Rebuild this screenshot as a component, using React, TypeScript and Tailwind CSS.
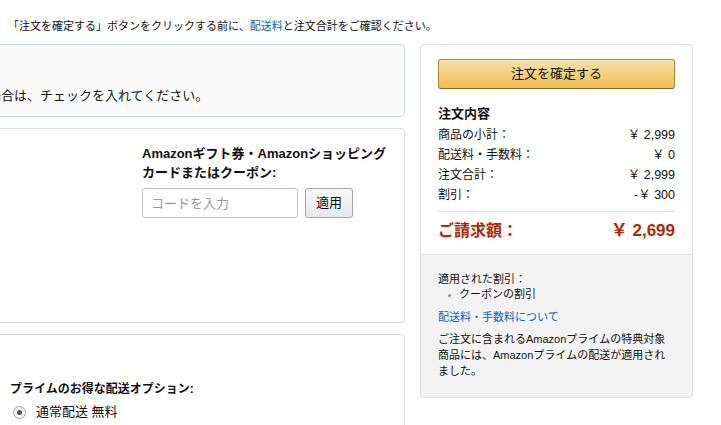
import React from "react";

const font = "font-['Liberation_Sans','Noto_Sans_CJK_JP',sans-serif]";

function Row({ label, value }: { label: string; value: string }) {
  return (
    <div className="flex justify-between text-[12px] leading-[20px] text-[#111]">
      <span>{label}</span>
      <span className="text-[12.5px]">{value}</span>
    </div>
  );
}

export default function App() {
  return (
    <div className={`${font} min-h-screen w-[721px] overflow-hidden bg-white text-[#111]`}>
      <div className="pt-[19px] pl-[8px] text-[11px] leading-[14px] whitespace-nowrap">
        「注文を確定する」ボタンをクリックする前に、
        <span className="text-[#0066c0]">配送料</span>
        と注文合計をご確認ください。
      </div>

      <div className="mt-[11px] flex">
        {/* left column, cut off at the left edge */}
        <div className="-ml-[200px] flex w-[605px] shrink-0 flex-col gap-[11px]">
          <div className="h-[73px] rounded-[4px] border border-[#c5d9e5] bg-[#fafafa] pl-[187px] pt-[41px] text-[13px] leading-[20px] whitespace-nowrap">
            場合は、チェックを入れてください。
          </div>

          <div className="flex h-[195px] rounded-[4px] border border-[#dddddd] bg-white pl-[16px] pt-[15px]">
            <div className="w-[325px] shrink-0" />
            <div>
              <div className="text-[13px] font-bold leading-[19px] whitespace-nowrap">
                Amazonギフト券・Amazonショッピング
                <br />
                カードまたはクーポン:
              </div>
              <div className="mt-[6px] flex gap-[7px]">
                <input
                  className="h-[30px] w-[156px] rounded-[3px] border border-[#c4c4c4] px-[8px] text-[13px] text-[#111] placeholder:text-[#999] shadow-[inset_0_1px_0_rgba(0,0,0,0.05)] outline-none"
                  placeholder="コードを入力"
                />
                <button className="h-[30px] w-[48px] rounded-[3px] border border-[#a2a6ac] bg-gradient-to-b from-[#f7f8fa] to-[#e7e9ec] text-[13px] text-[#111]">
                  適用
                </button>
              </div>
            </div>
          </div>

          <div className="flex h-[120px] rounded-t-[4px] border border-[#dddddd] bg-white pl-[16px] pt-[44px]">
            <div className="w-[193px] shrink-0" />
            <div>
              <div className="text-[12px] font-bold leading-[20px] text-[#111] whitespace-nowrap">
                プライムのお得な配送オプション:
              </div>
              <div className="mt-[3px] flex items-center">
                <span className="ml-[3px] flex h-[13px] w-[13px] items-center justify-center rounded-full border border-[#a6a6a6] bg-[#f3f3f3]">
                  <span className="h-[5px] w-[5px] rounded-full bg-[#555]" />
                </span>
                <span className="ml-[10px] text-[13px] leading-[20px] text-[#111]">
                  通常配送 無料
                </span>
              </div>
            </div>
          </div>
        </div>

        {/* right column */}
        <div className="ml-[15px] flex h-[354px] w-[273px] shrink-0 flex-col overflow-hidden rounded-[4px] border border-[#dddddd]">
          <div className="px-[17px] pt-[14px] pb-[12px]">
            <button className="h-[30px] w-full rounded-[3px] border border-[#a88734] border-b-[#846a29] bg-gradient-to-b from-[#f7dfa5] to-[#f0c14b] text-[13px] text-[#111] shadow-[inset_0_1px_0_rgba(255,255,255,0.4)]">
              注文を確定する
            </button>
            <div className="mt-[14px] text-[13px] font-bold leading-[22px]">注文内容</div>
            <Row label="商品の小計：" value="￥ 2,999" />
            <Row label="配送料・手数料：" value="￥ 0" />
            <Row label="注文合計：" value="￥ 2,999" />
            <Row label="割引：" value="-￥ 300" />
            <div className="mt-[6px] h-px bg-[#dddddd]" />
            <div className="mt-[8px] flex justify-between text-[16px] font-bold leading-[22px] text-[#b12704]">
              <span>ご請求額：</span>
              <span className="text-[17px]">￥ 2,699</span>
            </div>
          </div>
          <div className="flex-1 border-t border-[#dddddd] bg-[#f3f3f3] px-[17px] pt-[17px] text-[11px] leading-[15.5px] text-[#111]">
            <div>適用された割引：</div>
            <ul className="ml-[10px] flex h-[15px] items-center gap-[6px]">
              <span className="h-[3px] w-[3px] rounded-full bg-[#999]" />
              <li className="ml-[2px]">クーポンの割引</li>
            </ul>
            <div className="mt-[7px] text-[#0066c0]">配送料・手数料について</div>
            <div className="mt-[6px] whitespace-nowrap leading-[16px]">
              ご注文に含まれるAmazonプライムの特典対象
              <br />
              商品には、Amazonプライムの配送が適用され
              <br />
              ました。
            </div>
          </div>
        </div>
      </div>
    </div>
  );
}
